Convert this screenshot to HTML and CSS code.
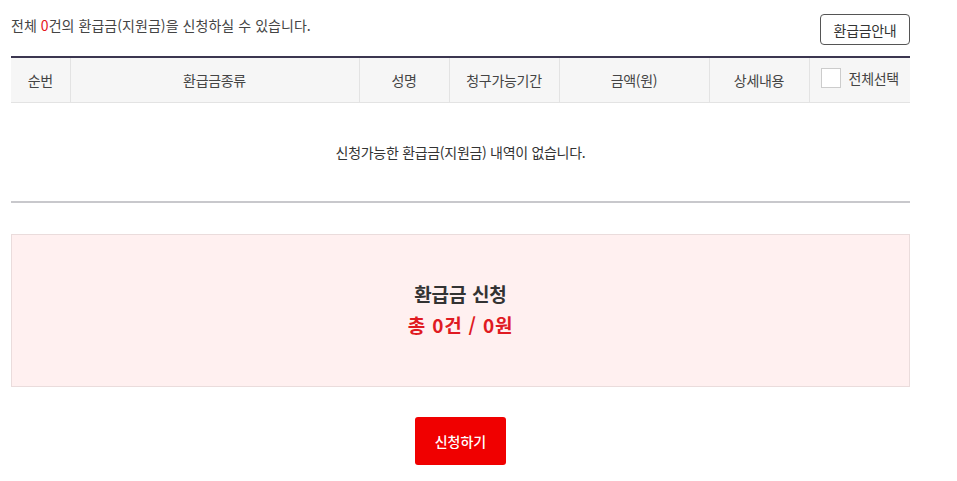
FILE: index.html
```html
<!DOCTYPE html>
<html lang="ko">
<head>
<meta charset="utf-8">
<title>환급금 신청</title>
<link rel="stylesheet" href="styles.css">
</head>
<body>
<div class="wrap">
  <div class="top">
    <p class="summary">전체 <span class="red">0</span>건의 환급금(지원금)을 신청하실 수 있습니다.</p>
    <button class="guide-btn" type="button">환급금안내</button>
  </div>
  <table class="list">
    <colgroup>
      <col class="c1"><col class="c2"><col class="c3"><col class="c4"><col class="c5"><col class="c6"><col class="c7">
    </colgroup>
    <thead>
      <tr>
        <th>순번</th>
        <th>환급금종류</th>
        <th>성명</th>
        <th>청구가능기간</th>
        <th>금액(원)</th>
        <th>상세내용</th>
        <th><span class="check-all"><span class="box"></span>전체선택</span></th>
      </tr>
    </thead>
    <tbody>
      <tr>
        <td colspan="7" class="empty">신청가능한 환급금(지원금) 내역이 없습니다.</td>
      </tr>
    </tbody>
  </table>
  <div class="apply-box">
    <div class="apply-title">환급금 신청</div>
    <div class="apply-total">총 0건 / 0원</div>
  </div>
  <div class="actions">
    <button class="submit-btn" type="button">신청하기</button>
  </div>
</div>
</body>
</html>
```
FILE: styles.css
```css
* { box-sizing: border-box; }
html, body { margin: 0; padding: 0; background: #fff; }
body {
  font-family: "Noto Sans CJK KR", "Noto Sans", sans-serif;
  color: #333;
  font-size: 14px;
}
.wrap {
  width: 899px;
  margin-left: 11px;
  padding-top: 14px;
}
.top {
  display: flex;
  justify-content: space-between;
  align-items: flex-start;
  height: 42px;
}
.summary {
  margin: 0;
  font-size: 14px;
  line-height: 22px;
  color: #444;
  letter-spacing: 0.05px;
}
.red { color: #e5151b; }
.guide-btn {
  width: 90px;
  height: 31px;
  border: 1px solid #555;
  border-radius: 4px;
  background: #fff;
  font-family: inherit;
  font-size: 14px;
  color: #333;
  padding: 0;
  letter-spacing: -0.3px;
}
.list {
  width: 100%;
  border-collapse: collapse;
  table-layout: fixed;
  border-top: 2px solid #3b3650;
}
.c1 { width: 59px; }
.c2 { width: 289px; }
.c3 { width: 90px; }
.c4 { width: 110px; }
.c5 { width: 150px; }
.c6 { width: 100px; }
.c7 { width: 101px; }
.list th {
  height: 45px;
  background: #f6f6f6;
  font-weight: normal;
  font-size: 14px;
  color: #444;
  border-left: 1px solid #e3e3e3;
  border-bottom: 1px solid #e3e3e3;
  padding: 0;
  letter-spacing: -0.3px;
}
.list th:first-child { border-left: none; }
.check-all {
  display: inline-flex;
  align-items: center;
  gap: 8px;
}
.box {
  width: 20px;
  height: 20px;
  border: 1px solid #ccc;
  background: #fff;
  display: inline-block;
}
.empty {
  height: 100px;
  text-align: center;
  font-size: 14px;
  color: #333;
  border-bottom: 2px solid #c8c8cc;
  padding: 0;
  letter-spacing: -0.3px;
}
.apply-box {
  margin-top: 31px;
  height: 153px;
  background: #fff0f0;
  border: 1px solid #eadcdc;
  display: flex;
  flex-direction: column;
  align-items: center;
  justify-content: center;
  padding-bottom: 4px;
}
.apply-title {
  font-size: 19px;
  font-weight: bold;
  color: #333;
  line-height: 31px;
}
.apply-total {
  font-size: 19px;
  font-weight: bold;
  color: #e01a22;
  line-height: 31px;
  letter-spacing: 0.8px;
}
.actions {
  display: flex;
  justify-content: center;
  margin-top: 30px;
}
.submit-btn {
  width: 91px;
  height: 48px;
  background: #f00000;
  color: #fff;
  border: none;
  border-radius: 3px;
  font-family: inherit;
  font-size: 14px;
  font-weight: 500;
}
```
